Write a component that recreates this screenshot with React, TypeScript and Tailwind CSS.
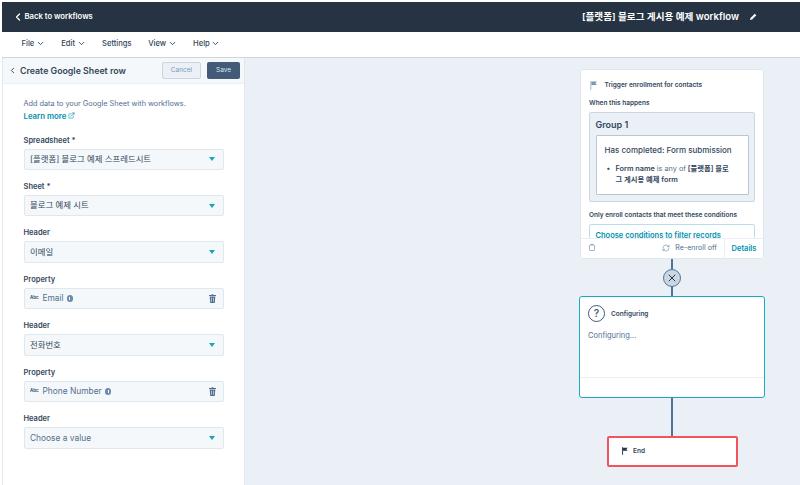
import React from "react";
import { ChevronLeft, ChevronDown, ExternalLink, X, RefreshCw } from "lucide-react";

const font = { fontFamily: '"Inter", "Noto Sans CJK KR", sans-serif' };

function Caret() {
  return <span className="ml-auto w-0 h-0 border-l-[3.5px] border-r-[3.5px] border-t-[4px] border-l-transparent border-r-transparent border-t-[#1ba3bd]" />;
}

function FlagIcon({ pole, flag, className }: { pole: string; flag: string; className: string }) {
  return (
    <svg viewBox="0 0 8 10" className={className}>
      <rect x="0" y="0" width="1.4" height="10" fill={pole} />
      <path d="M1.4 0.5H7.6L5.8 2.5L7.6 4.5H1.4Z" fill={flag} />
    </svg>
  );
}

function TrashIcon() {
  return (
    <svg viewBox="0 0 8 10" className="w-[7px] h-[9px] ml-auto mr-[-1px] shrink-0">
      <path d="M3 0H5V1H8V2H0V1H3Z" fill="#516f90" />
      <path d="M0.8 2.8H7.2L6.6 10H1.4Z" fill="#516f90" />
      <path d="M2.8 4V8.8M5.2 4V8.8" stroke="#f5f8fa" strokeWidth="0.7" />
    </svg>
  );
}

function InfoIcon() {
  return (
    <span className="ml-[3px] w-[6.5px] h-[6.5px] rounded-full bg-[#6d8bab] flex items-center justify-center shrink-0">
      <span className="w-[1px] h-[3.5px] bg-white" />
    </span>
  );
}

function Field({ label, children }: { label: string; children: React.ReactNode }) {
  return (
    <div className="h-[46.45px] shrink-0">
      <div className="h-[17px] text-[7.5px] leading-[18px] font-semibold text-[#33475b]">{label}</div>
      <div className="h-[21.5px] flex items-center pl-[5.5px] pr-[8px] bg-[#f5f8fa] border border-[#dfe7ef] rounded-[2px] text-[8.4px] text-[#33475b]">
        {children}
      </div>
    </div>
  );
}

function SelectField({ label, value, muted }: { label: string; value: string; muted?: boolean }) {
  return (
    <Field label={label}>
      <span className={muted ? "text-[#516f90]" : ""}>{value}</span>
      <Caret />
    </Field>
  );
}

function PropertyField({ value }: { value: string }) {
  return (
    <Field label="Property">
      <span className="text-[4.5px] font-semibold text-[#33475b] w-[12.5px]">Abc</span>
      <span className="text-[#516f90]">{value}</span>
      <InfoIcon />
      <TrashIcon />
    </Field>
  );
}

function MenuItem({ label, caret = true }: { label: string; caret?: boolean }) {
  return (
    <div className="flex items-center text-[7.6px] font-medium text-[#33475b]">
      {label}
      {caret && <ChevronDown size={9} strokeWidth={2.5} className="ml-[1.5px]" />}
    </div>
  );
}

function Connector({ top, height }: { top: number; height: number }) {
  return <div className="absolute left-[426px] w-[1.5px] bg-[#4f7599]" style={{ top, height }} />;
}

export default function App() {
  return (
    <div className="w-[800px] h-[485px] overflow-hidden bg-white pl-[2px] pt-[2px] flex flex-col" style={font}>
      <header className="h-[29.5px] shrink-0 bg-[#253342] text-white flex items-center pl-[10px] pr-[43px] justify-between">
        <div className="flex items-center text-[7.7px] font-semibold">
          <ChevronLeft size={12} strokeWidth={2.5} className="mr-[0.5px]" />
          Back to workflows
        </div>
        <div className="flex items-center text-[9.6px] font-semibold">
          [플랫폼] 블로그 게시용 예제 workflow
          <svg viewBox="0 0 8 8" className="w-[7px] h-[7px] ml-[11px]">
            <path d="M0 8L0.6 5.6L5.4 0.8L7.2 2.6L2.4 7.4Z" fill="#ffffff" />
          </svg>
        </div>
      </header>
      <nav className="h-[26px] shrink-0 bg-white border-b border-[#cbd6e2] flex items-center pl-[19.5px] gap-[16.5px]">
        <MenuItem label="File" />
        <MenuItem label="Edit" />
        <MenuItem label="Settings" caret={false} />
        <MenuItem label="View" />
        <MenuItem label="Help" />
      </nav>
      <div className="flex flex-1 min-h-0">
        <aside className="w-[243px] shrink-0 bg-white flex flex-col border-r border-l border-[#dfe7ef]">
          <div className="h-[26px] shrink-0 bg-[#f5f8fa] border-b border-[#eaf0f6] flex items-center pl-[5px] pr-[4px] pt-[1px]">
            <ChevronLeft size={9} strokeWidth={2.5} className="text-[#33475b] mr-[3px]" />
            <span className="text-[8.8px] font-semibold text-[#33475b]">Create Google Sheet row</span>
            <button className="ml-auto w-[39px] h-[17px] mr-[6px] rounded-[2px] bg-[#eaf0f6] border border-[#cbd6e2] text-[6.5px] text-[#7c98b6]">Cancel</button>
            <button className="w-[33px] h-[17px] rounded-[2px] bg-[#425b76] text-[6.5px] text-[#dfe7ef]">Save</button>
          </div>
          <div className="pl-[20.5px] pr-[20px] pt-[14px]">
            <p className="text-[7.3px] leading-[12px] text-[#516f90]">Add data to your Google Sheet with workflows.</p>
            <div className="flex items-center text-[7.8px] leading-[12px] font-semibold text-[#0091ae]">
              Learn more
              <ExternalLink size={7} className="ml-[2px]" />
            </div>
            <div className="mt-[10px] flex flex-col">
              <SelectField label="Spreadsheet *" value="[플랫폼] 블로그 예제 스프레드시트" />
              <SelectField label="Sheet *" value="블로그 예제 시트" />
              <SelectField label="Header" value="이메일" />
              <PropertyField value="Email" />
              <SelectField label="Header" value="전화번호" />
              <PropertyField value="Phone Number" />
              <SelectField label="Header" value="Choose a value" muted />
            </div>
          </div>
        </aside>
        <main className="relative flex-1 bg-[#eaf0f6] overflow-hidden">
          {/* Trigger card */}
          <div className="absolute left-[335px] top-[11px] w-[184px] h-[190px] bg-white border border-[#dfe7ef] rounded-[3px] overflow-hidden">
            <div className="flex items-center h-[14px] mt-[9px] pl-[9px]">
              <FlagIcon pole="#b6c7d6" flag="#7c98b6" className="w-[7.5px] h-[9px] mr-[7px]" />
              <span className="text-[6.5px] font-semibold text-[#33475b]">Trigger enrollment for contacts</span>
            </div>
            <div className="pl-[8px] mt-[5px] text-[6.5px] leading-[10px] font-semibold text-[#33475b]">When this happens</div>
            <div className="mx-[8px] mt-[4px] h-[90px] bg-[#eaf0f6] border border-[#cbd6e2] rounded-[2px] px-[5.5px]">
              <div className="h-[22px] pt-[2px] flex items-center text-[9px] font-semibold text-[#33475b]">Group 1</div>
              <div className="h-[60px] bg-white border border-[#b6c7d6] rounded-[1px] pl-[8px] pr-[4px] pt-[9px] text-[#33475b]">
                <div className="text-[8px] leading-[10px] font-medium">Has completed: Form submission</div>
                <div className="flex mt-[8px] text-[7.3px] leading-[11px] font-semibold">
                  <span className="w-[11px] pl-[2px] shrink-0">•</span>
                  <span className="whitespace-nowrap">Form name <span className="font-normal text-[#516f90]">is any of</span> [플랫폼] 블로<br />그 게시용 예제 form</span>
                </div>
              </div>
            </div>
            <div className="pl-[8px] mt-[8px] text-[6.5px] leading-[10px] font-semibold text-[#33475b]">Only enroll contacts that meet these conditions</div>
            <div className="mx-[8px] mt-[4px] h-[30px] bg-white border border-[#b5e1ea] rounded-[2px] pl-[5.5px] pt-[6px] text-[7.5px] leading-[10px] font-semibold text-[#0091ae]">Choose conditions to filter records</div>
            <div className="absolute left-0 right-0 bottom-0 h-[20px] bg-white border-t border-[#eaf0f6] flex items-center pl-[8px]">
              <svg viewBox="0 0 7 8" className="w-[6px] h-[7px] mb-[1px]">
                <rect x="0.5" y="1" width="6" height="6.5" rx="1" fill="none" stroke="#7c98b6" strokeWidth="0.9" />
                <path d="M2 0.5H5" stroke="#7c98b6" strokeWidth="0.9" />
              </svg>
              <RefreshCw size={8} className="ml-auto text-[#7c98b6] mr-[5px]" />
              <span className="text-[7.1px] text-[#516f90] mr-[7px] pt-[1px]">Re-enroll off</span>
              <span className="h-full border-l border-[#eaf0f6] w-[39px] pt-[1.5px] flex items-center justify-center text-[7.5px] font-semibold text-[#0091ae]">Details</span>
            </div>
          </div>

          <Connector top={201} height={38} />
          <div className="absolute left-[418px] top-[211px] w-[18px] h-[18px] rounded-full bg-[#cbd6e2] border border-[#4f7599] flex items-center justify-center">
            <X size={12} strokeWidth={2} className="text-[#253342]" />
          </div>

          {/* Configuring card */}
          <div className="absolute left-[334px] top-[238.5px] w-[186px] h-[101.5px] bg-white border-[1.5px] border-[#1aa9c4] rounded-[3px]">
            <div className="flex items-center mt-[8px] pl-[8px] h-[17px]">
              <span className="w-[17px] h-[17px] rounded-full border-[1.5px] border-[#425b76] flex items-center justify-center text-[10px] font-semibold text-[#425b76] mr-[6px]">?</span>
              <span className="text-[6.5px] font-semibold text-[#33475b] pt-[3px]">Configuring</span>
            </div>
            <div className="pl-[8px] mt-[8.5px] text-[7.5px] leading-[10px] text-[#516f90]">Configuring...</div>
            <div className="absolute left-0 right-0 top-[80px] border-t border-[#eaf0f6]" />
          </div>

          <Connector top={340} height={39} />

          {/* End card */}
          <div className="absolute left-[361.5px] top-[378px] w-[131px] h-[31px] bg-white border-[2px] border-[#f2545b] rounded-[2px] flex items-center pl-[13px]">
            <FlagIcon pole="#33475b" flag="#253342" className="w-[6px] h-[8px] mr-[5.5px]" />
            <span className="text-[6.5px] font-semibold text-[#33475b] pt-[1px]">End</span>
          </div>
        </main>
      </div>
    </div>
  );
}
